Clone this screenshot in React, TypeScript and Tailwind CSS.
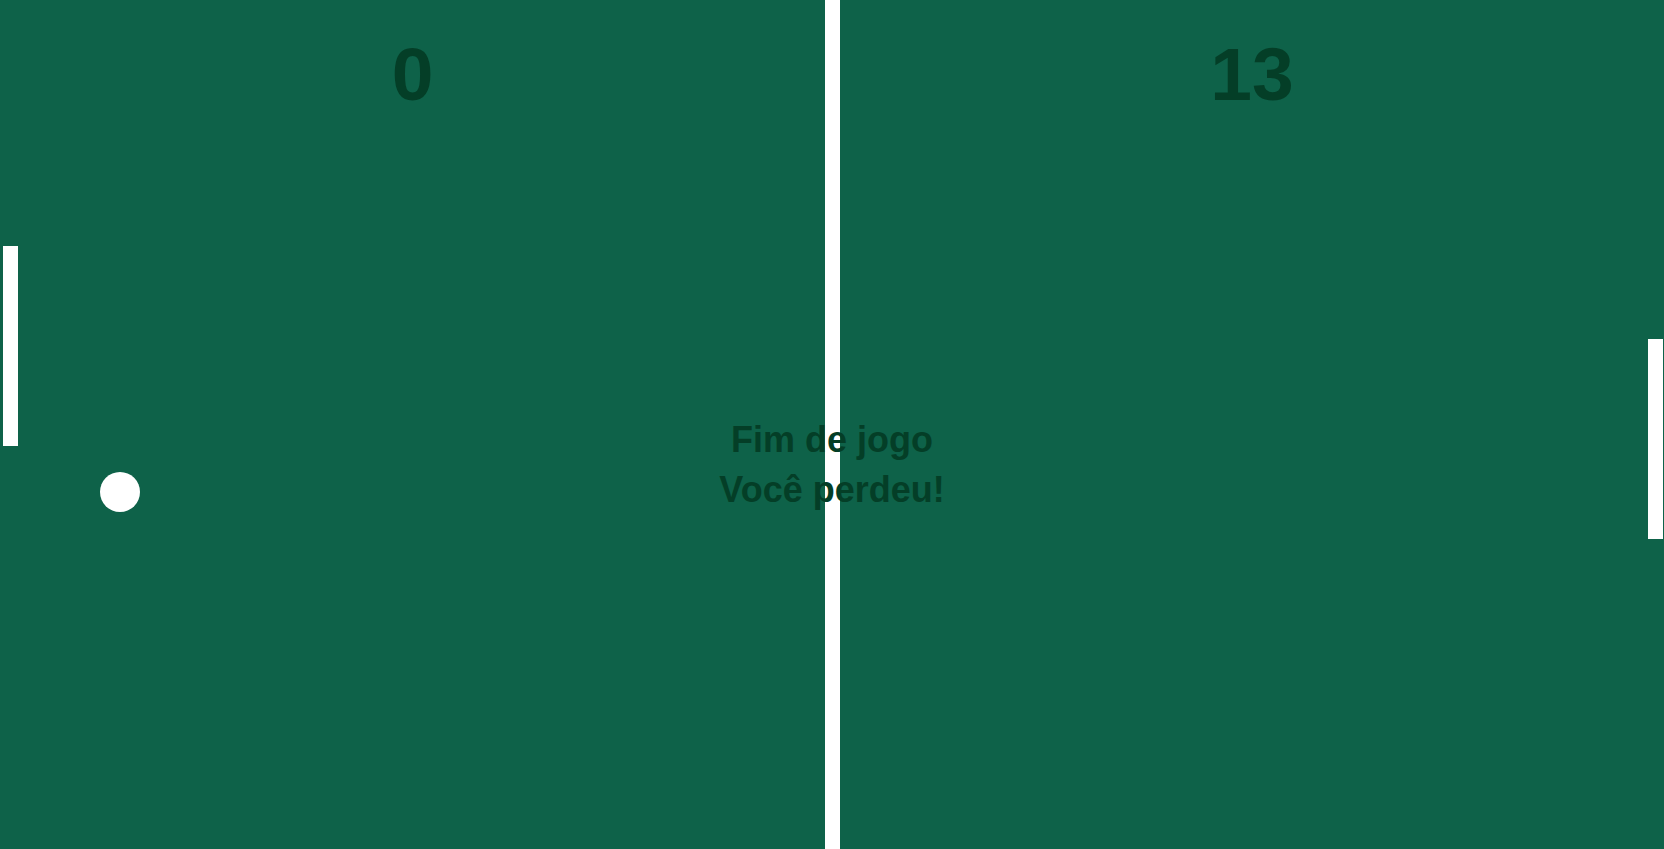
export default function App() {
  const left = 0;
  const right = 13;

  return (
    <div className="relative h-[849px] w-[1664px] overflow-hidden bg-[#0e6249] font-['Liberation_Sans',Arial,sans-serif]">
      {/* Court */}
      <div className="flex h-full">
        <div className="flex w-[825px] justify-center pt-[37px]">
          <span className="text-[75px] leading-[75px] font-bold text-[#043e27]">{left}</span>
        </div>
        <div className="w-[15px] bg-white" />
        <div className="flex flex-1 justify-center pt-[37px]">
          <span className="text-[75px] leading-[75px] font-bold text-[#043e27]">{right}</span>
        </div>
      </div>

      {/* Paddles and ball */}
      <div className="absolute left-[3px] top-[246px] h-[200px] w-[15px] bg-white" />
      <div className="absolute left-[1648px] top-[339px] h-[200px] w-[15px] bg-white" />
      <div className="absolute left-[100px] top-[472px] h-[40px] w-[40px] rounded-full bg-white" />

      {/* Game over message */}
      <div className="absolute inset-x-0 top-[415px] text-center text-[36px] leading-[50px] font-bold text-[#043e27]">
        <div>Fim de jogo</div>
        <div>Você perdeu!</div>
      </div>
    </div>
  );
}
